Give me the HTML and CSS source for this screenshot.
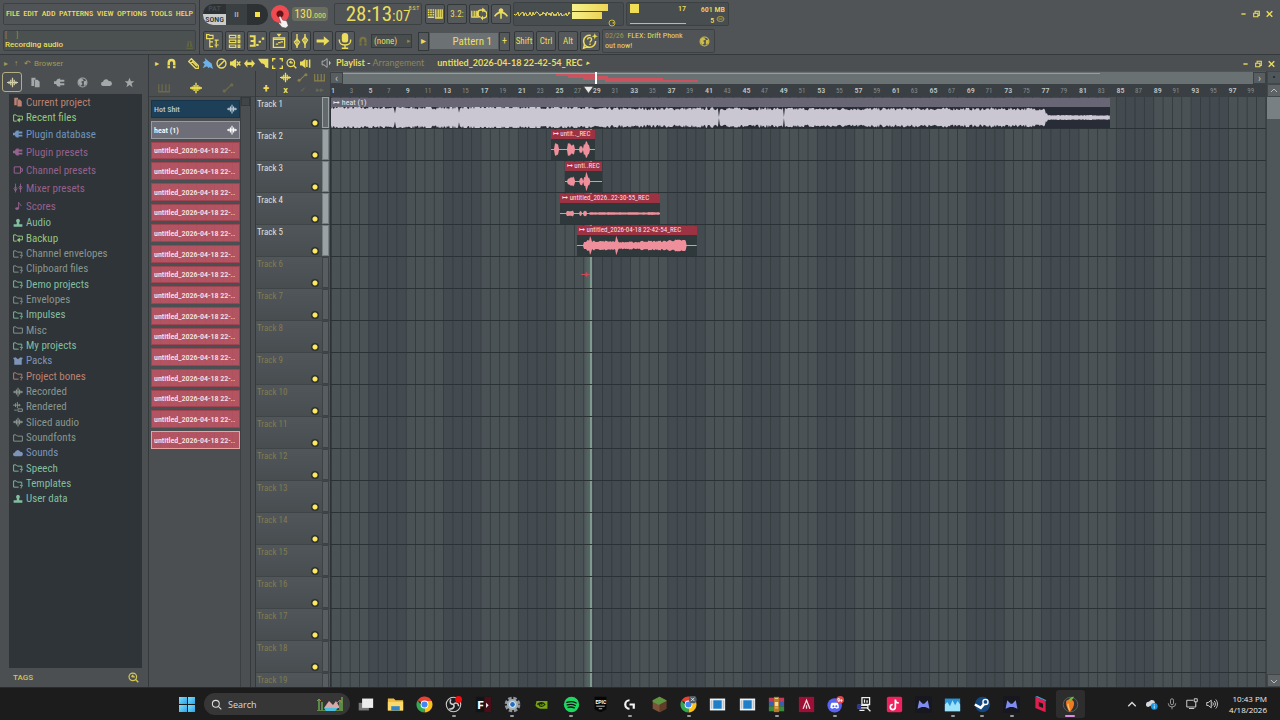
FILE: index.html
```
<!DOCTYPE html>
<html lang="en">
<head>
    <meta charset="UTF-8">
    <title>Playlist - Arrangement</title>
    <link rel="stylesheet" href="styles.css">
</head>
<body>
    <!-- Shared icons -->
    <svg class="defs" aria-hidden="true">
        <symbol id="wave" viewBox="0 0 16 16"><path d="M0 8h16M3 6v4M5.500 4v8M8 1v14M10.500 4v8M13 6v4" stroke="currentColor" stroke-width="1.800" fill="none"/></symbol>
        <symbol id="files" viewBox="0 0 16 16"><path d="M2 1h6v3H6v9H2zM7 4h4l3 3v8H7z" fill="currentColor"/></symbol>
        <symbol id="folder" viewBox="0 0 16 16"><path d="M1 13V3h4l2 2h8v8z" fill="none" stroke="currentColor" stroke-width="1.500"/></symbol>
        <symbol id="folderdot" viewBox="0 0 16 16"><path d="M9 13H1V3h4l2 2h7v4M11 10h4v1l-2 2v2" fill="none" stroke="currentColor" stroke-width="1.500"/></symbol>
        <symbol id="folderback" viewBox="0 0 16 16"><path d="M6 13H1V3h4l2 2h8v6H9" fill="none" stroke="currentColor" stroke-width="1.600"/><path d="M6 11l5-4v8z" fill="currentColor"/></symbol>
        <symbol id="plug" viewBox="0 0 16 16"><path d="M0 6h3c1-3 3-4 6-4v12c-3 0-5-1-6-4H0zM8 4h7v3H8zM8 9h7v3H8z" fill="currentColor"/></symbol>
        <symbol id="channel" viewBox="0 0 16 16"><path d="M2 3h10v10H2zM12 6h3v4h-3" fill="none" stroke="currentColor" stroke-width="1.600"/></symbol>
        <symbol id="mixer" viewBox="0 0 16 16"><path d="M4 1v14M12 1v14" stroke="currentColor" stroke-width="1.400"/><path d="M4 6l2.500 3L4 13 1.500 9zM12 4l2.500 3-2.500 4-2.500-4z" fill="none" stroke="currentColor" stroke-width="1.400"/></symbol>
        <symbol id="note" viewBox="0 0 16 16"><path d="M9 2v10M9 2c0 3 4 3 4 6" fill="none" stroke="currentColor" stroke-width="1.500"/><ellipse cx="6.500" cy="12" rx="3" ry="2.200" fill="currentColor"/></symbol>
        <symbol id="person" viewBox="0 0 16 16"><path d="M8 1a3.500 3.500 0 0 1 2 6v3h5v4H1v-4h5V7a3.500 3.500 0 0 1 2-6z" fill="currentColor"/></symbol>
        <symbol id="box" viewBox="0 0 16 16"><path d="M0 3l4-1 4 3 4-3 4 1-2 3v8H2V6z" fill="currentColor"/></symbol>
        <symbol id="render" viewBox="0 0 16 16"><path d="M0 5h12M4 2v6M7 0v10M10 3v4M2 13h4M8 11h7v4H8z" stroke="currentColor" stroke-width="1.500" fill="none"/></symbol>
        <symbol id="cloud" viewBox="0 0 16 16"><path d="M3 13a3 3 0 0 1 0-6 4.500 4.500 0 0 1 8.500-1A3.500 3.500 0 0 1 13 13z" fill="currentColor"/></symbol>
        <symbol id="globe" viewBox="0 0 16 16"><circle cx="8" cy="8" r="6.500" fill="none" stroke="currentColor" stroke-width="1.500"/><path d="M2 4l5-2 3 3-4 2 2 3-3 3-3-4zM10 6l4-1v5l-4 3z" fill="currentColor"/></symbol>
        <symbol id="star" viewBox="0 0 16 16"><path d="M8 1l2 5h5l-4 3.500L12.500 15 8 11.500 3.500 15 5 9.500 1 6h5z" fill="currentColor"/></symbol>
        <symbol id="magnet" viewBox="0 0 16 16"><path d="M4 15V7a4 4 0 0 1 8 0v8" fill="none" stroke="currentColor" stroke-width="3.500"/><path d="M2 11h5M9 11h5" stroke="#4a4f50"/></symbol>
        <symbol id="piano" viewBox="0 0 16 16"><path d="M1 3v10h14V3M5.500 3v9M10.500 3v9" fill="none" stroke="currentColor" stroke-width="1.700"/></symbol>
        <symbol id="auto" viewBox="0 0 16 16"><path d="M3 13L13 3" stroke="currentColor" stroke-width="1.600"/><circle cx="3" cy="12" r="2.200" fill="currentColor"/><circle cx="13" cy="4" r="2.200" fill="currentColor"/></symbol>
        <symbol id="pencil" viewBox="0 0 16 16"><path d="M1 5l4-4 10 10v4h-4zM4 8l4-4M6 5l7 7" fill="none" stroke="currentColor" stroke-width="1.800"/></symbol>
        <symbol id="brush" viewBox="0 0 16 16"><path d="M4 0l6 5 4 3 2 8-5-3-1 2-3-3-6 3 3-6-3-3 4-2z" fill="currentColor"/></symbol>
        <symbol id="no" viewBox="0 0 16 16"><path d="M3.500 12.500l9-9" stroke="currentColor" stroke-width="2"/><circle cx="8" cy="8" r="6.500" fill="none" stroke="currentColor" stroke-width="2"/></symbol>
        <symbol id="mute" viewBox="0 0 16 16"><path d="M0 5h3l6-4v14l-6-4H0z" fill="currentColor"/><path d="M10 5l5 6M15 5l-5 6" stroke="currentColor" stroke-width="2"/></symbol>
        <symbol id="slip" viewBox="0 0 16 16"><path d="M0 8l5-6v4h6V2l5 6-5 6v-4H5v4z" fill="currentColor"/></symbol>
        <symbol id="slice" viewBox="0 0 16 16"><path d="M0 1h15v14l-5-2v-3L7 8H5L2 4z" fill="currentColor"/></symbol>
        <symbol id="select" viewBox="0 0 16 16"><path d="M1 5V1h4M11 1h4v4M15 11v4h-4M5 15H1v-4" fill="none" stroke="currentColor" stroke-width="2"/></symbol>
        <symbol id="lens" viewBox="0 0 16 16"><circle cx="7" cy="7" r="5.500" fill="none" stroke="currentColor" stroke-width="1.800"/><path d="M11 11l4 4M5 7l2-2M7 4v3h3" stroke="currentColor" stroke-width="2" fill="none"/></symbol>
        <symbol id="play" viewBox="0 0 16 16"><path d="M0 5h3l5-4v14l-5-4H0z" fill="currentColor"/><path d="M10 3v10M14 2v12" stroke="currentColor" stroke-width="2.200"/></symbol>
        <symbol id="speaker" viewBox="0 0 16 16"><path d="M1 5h3l5-4v14l-5-4H1z" fill="none" stroke="currentColor" stroke-width="1.400"/><path d="M12 4l3 4-3 4z" fill="currentColor"/></symbol>
        <symbol id="tree" viewBox="0 0 20 20"><path d="M2 2h3l1 1h4v4H2zM6 8v10M6 11h4M6 17h4M14 9v5M12 9h5M12 15h5M14 15v3" fill="none" stroke="currentColor" stroke-width="1.500"/></symbol>
        <symbol id="rack" viewBox="0 0 20 20"><path d="M3 3h8v3H3zM3 9h8v3H3zM3 15h8v3H3zM14 3h2v3h-2zM14 9h2v3h-2zM14 15h2v3h-2z" fill="none" stroke="currentColor" stroke-width="1.500"/></symbol>
        <symbol id="roll" viewBox="0 0 20 20"><path d="M1 4h6v12H1M2 10h5M9 15h3M12 11h3M16 7h3" fill="none" stroke="currentColor" stroke-width="2.600"/></symbol>
        <symbol id="plist" viewBox="0 0 20 20"><path d="M3 6h14v12H3zM3 8h14M6 14h3M9 12h3M12 11h3" fill="none" stroke="currentColor" stroke-width="1.600"/><path d="M7 1h6l-3 4z" fill="currentColor"/></symbol>
        <symbol id="arrow" viewBox="0 0 20 20"><path d="M2 8h9V4l7 6-7 6v-4H2z" fill="currentColor"/></symbol>
        <symbol id="mic" viewBox="0 0 20 20"><rect x="6" y="0" width="8" height="12" rx="4" fill="currentColor"/><path d="M3 8v2a7 5 0 0 0 14 0V8M10 15v4M6 19h8" fill="none" stroke="currentColor" stroke-width="1.800"/></symbol>
        <symbol id="typing" viewBox="0 0 20 20"><path d="M1 5h2M4 5h2M7 5h2M1 8h2M4 8h2M7 8h2M1 11h2M4 11h2M7 11h2M1 14h8" stroke="currentColor" stroke-width="2"/><path d="M11 4v11h8V4M14 4v10M16.500 4v10" fill="none" stroke="currentColor" stroke-width="1.700"/></symbol>
        <symbol id="loop" viewBox="0 0 20 20"><path d="M1 6v8h8V6M4 6v7M6.500 6v7" fill="none" stroke="currentColor" stroke-width="1.600"/><path d="M12 14a4.500 4.500 0 0 1 1-9h2M16 6a4.500 4.500 0 0 1-1 9" fill="none" stroke="currentColor" stroke-width="2"/><path d="M14 2l4 3-4 3zM15 12v6l-3-3z" fill="currentColor"/></symbol>
        <symbol id="multi" viewBox="0 0 20 20"><path d="M10 3v13M10 8c-4 0-6 2-8 5M10 8c4 0 6 2 8 5" fill="none" stroke="currentColor" stroke-width="2"/><circle cx="10" cy="6" r="3" fill="currentColor"/></symbol>
        <symbol id="help" viewBox="0 0 20 20"><path d="M11 3a7.500 7.500 0 1 0 6 7M3 15l-1 4 5-2" fill="none" stroke="currentColor" stroke-width="1.900"/><path d="M7 8c0-3 5-3 5 0 0 2-2 2-2 4M10 13v2" fill="none" stroke="currentColor" stroke-width="1.700"/><path d="M16 0l1 3 3 1-3 1-1 3-1-3-3-1 3-1z" fill="currentColor"/></symbol>
        <symbol id="chrome" viewBox="0 0 20 20"><path d="M10 10L2 5a9.300 9.300 0 0 1 16.500 1H10z" fill="#e64335"/><path d="M10 10V6h8.500A9.300 9.300 0 0 1 10 19.300z" fill="#fbc116"/><path d="M2 5l5 7 4 2-2 5.300A9.300 9.300 0 0 1 2 5z" fill="#33a853"/><circle cx="10" cy="10" r="4.600" fill="#fff"/><circle cx="10" cy="10" r="3.600" fill="#4285f4"/></symbol>
        <symbol id="window" viewBox="0 0 20 20"><path d="M1 3h18v14H1z" fill="#f1f3f5"/><path d="M5 5h10v10H5z" fill="#1e7fc8"/><path d="M2 5h2v10H2zM16 5h2v10h-2z" fill="#b9c3ca"/></symbol>
        <symbol id="medal" viewBox="0 0 20 20"><path d="M0 0h20v20H0z" fill="#17171f"/><path d="M3 15l2-10 4 4h2l4-4 2 10-5-2H8z" fill="#7f8cf0"/></symbol>
    </svg>

    <header class="top">
        <div class="top-left">
            <nav class="menu panel">
                <button>FILE</button><button>EDIT</button><button>ADD</button><button>PATTERNS</button><button>VIEW</button><button>OPTIONS</button><button>TOOLS</button><button>HELP</button>
            </nav>
            <div class="hint panel">
                <span class="brackets">[ &nbsp; &nbsp; ]</span>
                <span class="hint-text">Recording audio</span>
                <svg class="metronome" viewBox="0 0 16 16"><path d="M5 1h6l3 14H2z" fill="#5e6441"/><path d="M8 2v9M4 12h8" stroke="#3d4243"/></svg>
            </div>
        </div>
        <div class="bars">
            <div class="bar">
                <div class="transport">
                    <button class="mode"><span class="pat">PAT</span><span class="song">SONG</span></button>
                    <button class="pause" aria-label="Pause">II</button>
                    <button class="stop" aria-label="Stop"><i></i></button>
                </div>
                <button class="record" aria-label="Record">
                    <svg class="cursor" viewBox="0 0 14 16"><path d="M1 1l2-1 3 5 5 1 2 6-3 3-5-1-4-5 1-1 2 1z" fill="#f4f1f1" stroke="#555" stroke-width=".600"/></svg>
                </button>
                <output class="tempo">130<small>.000</small></output>
                <div class="clock panel"><span>28:13</span><span class="sub">:07</span><small>B:S:T</small></div>
                <div class="group">
                    <button class="tool" aria-label="Typing keyboard"><svg><use href="#typing"/></svg></button>
                    <button class="tool" aria-label="Countdown">3.2:</button>
                    <button class="tool" aria-label="Loop record"><svg><use href="#loop"/></svg></button>
                    <button class="tool" aria-label="Multilink"><svg><use href="#multi"/></svg></button>
                </div>
                <div class="scope panel">
                    <svg class="scope-wave" viewBox="0 0 58 22"><path id="scopePath" fill="none" stroke="#e9d85b"/></svg>
                    <div class="meters"><i></i><i></i><svg viewBox="0 0 16 16"><circle cx="8" cy="8" r="6" fill="none" stroke="#c9b33d" stroke-width="2"/><path d="M8 8l4-3v5z" fill="#c9b33d"/></svg></div>
                </div>
                <div class="stats panel">
                    <div class="cpu"><i></i><b>17</b></div>
                    <div class="mem"><b>601 MB</b><b>5 <svg viewBox="0 0 16 16"><ellipse cx="8" cy="8" rx="7" ry="5" fill="none" stroke="#b3a23f" stroke-width="2"/><path d="M4 8h8" stroke="#b3a23f" stroke-width="2"/></svg></b></div>
                </div>
            </div>
            <div class="bar">
                <div class="group">
                    <button class="tool" aria-label="Browser"><svg><use href="#tree"/></svg></button>
                    <button class="tool" aria-label="Channel rack"><svg><use href="#rack"/></svg></button>
                    <button class="tool" aria-label="Piano roll"><svg><use href="#roll"/></svg></button>
                    <button class="tool" aria-label="Playlist"><svg><use href="#plist"/></svg></button>
                    <button class="tool" aria-label="Mixer"><svg><use href="#mixer"/></svg></button>
                    <button class="tool" aria-label="Next"><svg><use href="#arrow"/></svg></button>
                    <button class="tool" aria-label="Microphone"><svg><use href="#mic"/></svg></button>
                </div>
                <div class="snap">
                    <svg><use href="#magnet"/></svg>
                    <select aria-label="Snap"><option>(none)</option></select>
                    <span>▸</span>
                </div>
                <div class="pattern">
                    <button class="slim" aria-label="Pattern menu">▸</button>
                    <input type="text" value="Pattern 1" aria-label="Pattern">
                    <button class="slim" aria-label="Add pattern">+</button>
                </div>
                <div class="group">
                    <button class="tool">Shift</button>
                    <button class="tool">Ctrl</button>
                    <button class="tool">Alt</button>
                    <button class="tool" aria-label="Help"><svg><use href="#help"/></svg></button>
                </div>
                <div class="news panel">
                    <p><span>02/26</span>&nbsp; FLEX: Drift Phonk<br>out now!</p>
                    <svg><use href="#globe"/></svg>
                </div>
            </div>
        </div>
        <div class="win">
            <button aria-label="Minimize"><svg viewBox="0 0 10 10"><path d="M2 5h6" stroke="currentColor" stroke-width="2"/></svg></button>
            <button aria-label="Restore"><svg viewBox="0 0 10 10"><path d="M1 4h6v5H1zM3 4V1h6v6H7" fill="none" stroke="currentColor" stroke-width="1.500"/></svg></button>
            <button aria-label="Close"><svg viewBox="0 0 10 10"><path d="M1 1l8 8M9 1L1 9" stroke="currentColor" stroke-width="2"/></svg></button>
        </div>
    </header>

    <main>
        <aside class="browser">
            <div class="browser-title"><span>▸</span><span>↑</span><span>↶</span> Browser</div>
            <div class="browser-tabs">
                <button class="on" aria-label="All"><svg><use href="#wave"/></svg></button>
                <button aria-label="Files"><svg><use href="#files"/></svg></button>
                <button aria-label="Plugins"><svg><use href="#plug"/></svg></button>
                <button aria-label="Web"><svg><use href="#globe"/></svg></button>
                <button aria-label="Cloud"><svg><use href="#cloud"/></svg></button>
                <button aria-label="Starred"><svg><use href="#star"/></svg></button>
            </div>
            <ul class="tree">
                <li class="rust"><a href="#"><svg><use href="#files"/></svg>Current project</a></li>
                <li class="lime"><a href="#"><svg><use href="#folderback"/></svg>Recent files</a></li>
                <li class="blue tall"><a href="#"><svg><use href="#plug"/></svg>Plugin database</a></li>
                <li class="pink tall"><a href="#"><svg><use href="#plug"/></svg>Plugin presets</a></li>
                <li class="pink tall"><a href="#"><svg><use href="#channel"/></svg>Channel presets</a></li>
                <li class="pink tall"><a href="#"><svg><use href="#mixer"/></svg>Mixer presets</a></li>
                <li class="pink tall"><a href="#"><svg><use href="#note"/></svg>Scores</a></li>
                <li class="mint"><a href="#"><svg><use href="#person"/></svg>Audio</a></li>
                <li class="lime"><a href="#"><svg><use href="#folderback"/></svg>Backup</a></li>
                <li class="gray"><a href="#"><svg><use href="#folderdot"/></svg>Channel envelopes</a></li>
                <li class="gray"><a href="#"><svg><use href="#folderdot"/></svg>Clipboard files</a></li>
                <li class="mint"><a href="#"><svg><use href="#folderdot"/></svg>Demo projects</a></li>
                <li class="gray"><a href="#"><svg><use href="#folderdot"/></svg>Envelopes</a></li>
                <li class="mint"><a href="#"><svg><use href="#folderdot"/></svg>Impulses</a></li>
                <li class="gray"><a href="#"><svg><use href="#folder"/></svg>Misc</a></li>
                <li class="mint"><a href="#"><svg><use href="#folderdot"/></svg>My projects</a></li>
                <li class="blue2"><a href="#"><svg><use href="#box"/></svg>Packs</a></li>
                <li class="rust"><a href="#"><svg><use href="#folderdot"/></svg>Project bones</a></li>
                <li class="gray"><a href="#"><svg><use href="#wave"/></svg>Recorded</a></li>
                <li class="gray"><a href="#"><svg><use href="#render"/></svg>Rendered</a></li>
                <li class="gray"><a href="#"><svg><use href="#wave"/></svg>Sliced audio</a></li>
                <li class="gray"><a href="#"><svg><use href="#folder"/></svg>Soundfonts</a></li>
                <li class="blue2"><a href="#"><svg><use href="#cloud"/></svg>Sounds</a></li>
                <li class="mint"><a href="#"><svg><use href="#folderdot"/></svg>Speech</a></li>
                <li class="mint"><a href="#"><svg><use href="#folderdot"/></svg>Templates</a></li>
                <li class="mint"><a href="#"><svg><use href="#person"/></svg>User data</a></li>
            </ul>
            <div class="tags">TAGS <svg><use href="#lens"/></svg></div>
        </aside>

        <section class="playlist">
            <div class="titlebar">
                <div class="tools">
                    <button aria-label="Menu">▸</button>
                    <button aria-label="Snap"><svg><use href="#magnet"/></svg></button>
                    <button class="gap" aria-label="Draw"><svg><use href="#pencil"/></svg></button>
                    <button class="active" aria-label="Paint"><svg><use href="#brush"/></svg></button>
                    <button aria-label="Delete"><svg><use href="#no"/></svg></button>
                    <button aria-label="Mute"><svg><use href="#mute"/></svg></button>
                    <button aria-label="Slip"><svg><use href="#slip"/></svg></button>
                    <button aria-label="Slice"><svg><use href="#slice"/></svg></button>
                    <button aria-label="Select"><svg><use href="#select"/></svg></button>
                    <button aria-label="Zoom"><svg><use href="#lens"/></svg></button>
                    <button aria-label="Playback"><svg><use href="#play"/></svg></button>
                </div>
                <svg class="spk"><use href="#speaker"/></svg>
                <h1>Playlist - <span>Arrangement</span></h1>
                <strong>untitled_2026-04-18 22-42-54_REC</strong><em>▸</em>
                <div class="win">
                    <button aria-label="Minimize"><svg viewBox="0 0 10 10"><path d="M2 5h6" stroke="currentColor" stroke-width="2"/></svg></button>
                    <button aria-label="Restore"><svg viewBox="0 0 10 10"><path d="M1 4h6v5H1zM3 4V1h6v6H7" fill="none" stroke="currentColor" stroke-width="1.500"/></svg></button>
                    <button aria-label="Close"><svg viewBox="0 0 10 10"><path d="M1 1l8 8M9 1L1 9" stroke="currentColor" stroke-width="2"/></svg></button>
                </div>
            </div>

            <div class="workspace">
                <div class="picker">
                    <div class="picker-tabs">
                        <button aria-label="Patterns"><svg><use href="#piano"/></svg></button>
                        <button class="on" aria-label="Audio"><svg><use href="#wave"/></svg></button>
                        <button aria-label="Automation"><svg><use href="#auto"/></svg></button>
                    </div>
                    <div class="picker-body">
                        <div class="picker-list" id="pickerList">
                            <button class="navy">Hot Shit<svg><use href="#wave"/></svg></button>
                            <button class="grayclip">heat (1)<svg><use href="#wave"/></svg></button>
                        </div>
                        <div class="picker-scroll"><i></i></div>
                    </div>
                </div>

                <div class="arranger">
                    <div class="corner">
                        <button class="add" aria-label="Add track">+</button>
                        <div class="corner-icons">
                            <button class="lit" aria-label="Audio"><svg><use href="#wave"/></svg></button>
                            <button class="dim" aria-label="Automation"><svg><use href="#auto"/></svg></button>
                            <button class="dim" aria-label="Patterns"><svg><use href="#piano"/></svg></button>
                            <button aria-label="Clear">x</button>
                            <button class="dark" aria-label="Confirm">✓</button>
                            <button class="dark" aria-label="More">▸▸</button>
                        </div>
                    </div>
                    <div class="overview">
                        <button aria-label="Scroll left">‹</button>
                        <svg viewBox="0 0 910 12" preserveAspectRatio="none">
                            <path d="M0 1h757v1H0z" fill="#979d9f"/>
                            <path d="M213 2h40v2h12v2h55v2h35v2H262V8h-22V6h-15V4h-12z" fill="#c9535f"/>
                            <path d="M252 0h2v12h-2z" fill="#fff"/>
                        </svg>
                        <button aria-label="Scroll right">›</button>
                    </div>
                    <div class="ruler" id="ruler">
                        <svg class="marker" viewBox="0 0 10 8"><path d="M0 0h10L5 7z" fill="#e6e9e6" stroke="#444"/></svg>
                    </div>
                    <div class="heads" id="heads"></div>
                    <div class="lanes" id="lanes"><div class="playhead"></div></div>
                    <div class="vscroll">
                        <button class="dot" aria-label="Options">•</button>
                        <button aria-label="Scroll up"><svg viewBox="0 0 8 8"><path d="M1 5l3-3 3 3" fill="none" stroke="currentColor"/></svg></button>
                        <i></i>
                        <button class="down" aria-label="Scroll down"><svg viewBox="0 0 8 8"><path d="M1 3l3 3 3-3" fill="none" stroke="currentColor"/></svg></button>
                    </div>
                </div>
            </div>
        </section>
    </main>

    <footer class="taskbar">
        <button class="start" aria-label="Start"><i></i><i></i><i></i><i></i></button>
        <label class="search">
            <svg viewBox="0 0 16 16"><circle cx="7" cy="7" r="5" fill="none" stroke="#ddd" stroke-width="1.500"/><path d="M11 11l4 4" stroke="#ddd" stroke-width="1.500"/></svg>
            <input type="text" placeholder="Search" aria-label="Search">
            <svg class="scene" viewBox="0 0 27 16"><path d="M1 14h26v1H1z" fill="#5d8b45"/><path d="M8 12l5-7 4 4 3-4 4 7z" fill="#d6a9ab"/><path d="M8 12h14l-3 3h-9z" fill="#4ec0dd"/><path d="M3 14V3M6 14V6M24 14V4M26 14V1" stroke="#5b8a48" stroke-width="2"/><path d="M1 5l2-2 2 2M21 7l3-3 2 3" stroke="#b08a45" fill="none"/></svg>
        </label>
        <div class="apps">
            <button aria-label="Task view"><svg viewBox="0 0 20 20"><path d="M2 8h12v9H2z" fill="#777"/><path d="M6 3h13v11H6z" fill="#ececec"/></svg></button>
            <button aria-label="Explorer"><svg viewBox="0 0 20 20"><path d="M1 3h7l2 2h9v12H1z" fill="#f0bd3f"/><path d="M1 7h18v10H1z" fill="#fbd96b"/><path d="M5 12h10v5H5z" fill="#2f86cf"/></svg></button>
            <button aria-label="Chrome"><svg><use href="#chrome"/></svg></button>
            <button class="run" aria-label="OBS"><svg viewBox="0 0 20 20"><circle cx="10" cy="10" r="8.500" fill="#1d1d20" stroke="#ccc" stroke-width="1.300"/><path d="M10 10c-4 0-5-3-3-6M10 10c2-3 6-2 6 2M10 10c2 3-1 6-5 5" stroke="#ccc" stroke-width="1.800" fill="none"/><circle cx="16" cy="4" r="4" fill="#f00d0d"/></svg></button>
            <button aria-label="F"><svg viewBox="0 0 20 20"><path d="M1 1h18v18H1z" fill="#0f1417"/><path d="M11 1h8v18h-8z" fill="#4b0d17"/><text x="3" y="15" class="glyph">F</text><path d="M13 8l3 3-3 3z" fill="#eee"/></svg></button>
            <button class="run" aria-label="Settings"><svg viewBox="0 0 20 20"><circle cx="10" cy="10" r="7.500" fill="none" stroke="#8d969d" stroke-width="3.500" stroke-dasharray="3.900 2"/><circle cx="10" cy="10" r="6.500" fill="#a7aeb4"/><circle cx="10" cy="10" r="3.800" fill="#e8eef3"/><circle cx="10" cy="10" r="2.800" fill="#1f6fc0"/></svg></button>
            <button aria-label="NVIDIA"><svg viewBox="0 0 20 20"><path d="M4 6h13v9H9c-3 0-6-3-6-4s1-3 1-5z" fill="#76a712"/><path d="M5 10c3-3 7-3 9 0-2 3-6 3-7 0 1-1 3-1 4 0" fill="none" stroke="#1b2608" stroke-width="1.300"/></svg></button>
            <button class="run" aria-label="Spotify"><svg viewBox="0 0 20 20"><circle cx="10" cy="10" r="9" fill="#1ed760"/><path d="M4.500 7.500c4-1.500 8-1 11 .700M5 10.500c3-1 7-.700 9.500.700M6 13.300c3-.800 5-.500 7.500.600" fill="none" stroke="#111" stroke-width="1.600" stroke-linecap="round"/></svg></button>
            <button aria-label="Epic Games"><svg viewBox="0 0 20 20"><path d="M3 1h14v15l-7 3-7-3z" fill="#060606"/><text x="4" y="9" class="tiny">EPIC</text><path d="M5 12h10M8 15h4" stroke="#ddd"/></svg></button>
            <button class="run" aria-label="Logitech"><svg viewBox="0 0 20 20"><path d="M10 5a5 5 0 0 0 0 10M10 10h5v5" fill="none" stroke="#f4f4f4" stroke-width="2.600"/></svg></button>
            <button aria-label="Minecraft"><svg viewBox="0 0 20 20"><path d="M10 1l8 4v10l-8 4-8-4V5z" fill="#7c5238"/><path d="M10 1l8 4v2l-8 4-8-4V5z" fill="#5f9440"/><path d="M10 10l8-4v9l-8 4z" fill="#5f3d29"/></svg></button>
            <button class="run" aria-label="Chrome profile"><svg viewBox="0 0 20 20"><use href="#chrome"/><circle cx="15" cy="4" r="4.600" fill="#4f5c66"/><path d="M13 2l4 4M17 2l-4 4" stroke="#eee"/></svg></button>
            <button aria-label="Window"><svg><use href="#window"/></svg></button>
            <button aria-label="Window"><svg><use href="#window"/></svg></button>
            <button class="run" aria-label="WinRAR"><svg viewBox="0 0 20 20"><path d="M1 2h18v5H1z" fill="#c33b57"/><path d="M1 7h18v5H1z" fill="#3d5db5"/><path d="M1 12h18v6H1z" fill="#3a8b3e"/><path d="M7 1h6v18H7z" fill="#b77b2b"/><path d="M8 7h4v5H8z" fill="#f1de9a"/><path d="M8 3h4M8 14h4" stroke="#f1de9a"/></svg></button>
            <button aria-label="A"><svg viewBox="0 0 20 20"><path d="M1 1h18v18H1z" fill="#9d0f35"/><path d="M6 15l4-10 4 10M10 11v4" fill="none" stroke="#f3d8df" stroke-width="1.500"/></svg></button>
            <button class="run" aria-label="Discord"><svg viewBox="0 0 20 20"><circle cx="9" cy="11" r="8.500" fill="#5865f2"/><path d="M4 14c0-4 1-6 2-6h6c1 0 2 2 2 6l-3 1-1-1H8l-1 1z" fill="#fff"/><circle cx="7.500" cy="12" r="1.200" fill="#5865f2"/><circle cx="11" cy="12" r="1.200" fill="#5865f2"/><circle cx="15.500" cy="4.500" r="4.500" fill="#e2474b"/><text x="12" y="7" class="tiny">9+</text></svg></button>
            <button aria-label="Setup"><svg viewBox="0 0 20 20"><path d="M7 2h9v8H7zM3 11h11v3H3z" fill="#161616" stroke="#eee" stroke-width="1.500"/><path d="M10 4v4M13 5v3M13 14l4 4M4 17h6" stroke="#eee" stroke-width="1.500"/><path d="M1 10h5v5H1z" fill="#2c3791"/></svg></button>
            <button aria-label="TikTok"><svg viewBox="0 0 20 20"><rect x="1" y="1" width="18" height="18" rx="2" fill="#f0215c"/><path d="M11 4v9a3 3 0 1 1-3-3M11 4c0 3 2 4 4 4" fill="none" stroke="#fff" stroke-width="2"/></svg></button>
            <button aria-label="Medal"><svg><use href="#medal"/></svg></button>
            <button class="run" aria-label="Monitor"><svg viewBox="0 0 20 20"><path d="M1 3h18v15H1z" fill="#2b94d6"/><path d="M1 10l3-3 3 5 3-7 3 6 3-5 3 4v8H1z" fill="#9be2fa"/></svg></button>
            <button class="run" aria-label="Steam"><svg viewBox="0 0 20 20"><circle cx="10" cy="10" r="9" fill="#14477e"/><path d="M1 10l7 4 6-7" stroke="#fff" stroke-width="3" fill="none"/><circle cx="13.500" cy="7" r="3" fill="#14477e" stroke="#fff" stroke-width="1.600"/></svg></button>
            <button class="run" aria-label="Medal"><svg><use href="#medal"/></svg></button>
            <button aria-label="Roblox"><svg viewBox="0 0 20 20"><path d="M4 1l12 5v13L4 14z" fill="#e21d50"/><path d="M8 7l5 2v5l-5-2z" fill="#171717"/><path d="M4 1l2-1 11 5-1 1z" fill="#39a5c8"/></svg></button>
            <button class="run current" aria-label="FL Studio"><svg viewBox="0 0 20 20"><circle cx="10" cy="10" r="8.500" fill="#2e3030" stroke="#616767"/><path d="M5 6c3-3 8-2 9 1 1 4-2 9-5 12-2-3-5-8-4-13z" fill="#f07a20"/><path d="M7 9c0 3 1 5 2 8" stroke="#fdc36b" stroke-width="1.500" fill="none"/><path d="M8 6c0-3 3-5 6-5-1 3-3 5-6 5z" fill="#6cbf3e"/></svg></button>
        </div>
        <div class="tray">
            <svg viewBox="0 0 16 16"><path d="M3 11l5-5 5 5" fill="none" stroke="#ddd" stroke-width="1.800"/></svg>
            <svg viewBox="0 0 16 16"><path d="M3 12a3.500 3.500 0 0 1 1-7c3-4 8-2 8 2z" fill="#d5d9dd"/><circle cx="11" cy="11" r="4.500" fill="#1593e0"/><path d="M11 8v1M11 10v4" stroke="#fff"/></svg>
            <svg viewBox="0 0 16 16"><rect x="6" y="1" width="4" height="8" rx="2" fill="none" stroke="#bbb"/><path d="M3 7a5 5 0 0 0 10 0M8 12v3" fill="none" stroke="#bbb"/></svg>
            <svg viewBox="0 0 16 16"><path d="M10 3H1v9h12V9M4 14h7M11 1h4v4h-4zM13 5v5" fill="none" stroke="#ddd" stroke-width="1.200"/></svg>
            <svg viewBox="0 0 16 16"><path d="M1 6h2l4-3v10l-4-3H1zM9 6c1 1 1 3 0 4M11 4c2 2 2 6 0 8M13 2c3 3 3 9 0 12" fill="none" stroke="#ddd" stroke-width="1.200"/></svg>
            <div class="time">10:43 PM<br>4/18/2026</div>
        </div>
    </footer>
    <script src="script.js"></script>
</body>
</html>
```
FILE: styles.css
```
:root {
    --bg: #4b4f51;
    --line: #343a3c;
    --dark: #2e3437;
    --yellow: #ecdc5c;
    --narrow: "Roboto Condensed", "Liberation Sans", sans-serif;
}

* { box-sizing: border-box; }

body {
    margin: 0;
    height: 100vh;
    display: flex;
    flex-direction: column;
    overflow: hidden;
    background: var(--bg);
    color: var(--yellow);
    font-family: var(--narrow);
    font-size: 11px;
}

button, input, select {
    font: inherit;
    color: inherit;
    background: none;
    border: 0;
    padding: 0;
    margin: 0;
    min-width: 0;
}

button { cursor: pointer; }
svg { display: block; flex: none; }
.defs { position: absolute; width: 0; height: 0; }
.panel { border: 1px solid #3c4243; border-radius: 2px; background: #505456; }

/* Header */
.top {
    display: flex;
    height: 55px;
    flex: none;
    background: #505456;
    border-bottom: 1px solid var(--line);
}

.top-left {
    width: 200px;
    padding: 3px;
    border-right: 1px solid var(--line);
    display: flex;
    flex-direction: column;
    gap: 5px;
}

.menu {
    height: 22px;
    display: flex;
    align-items: center;
    justify-content: space-between;
    padding: 0 2px;
    font-size: 8px;
    font-weight: 500;
}

.hint {
    height: 22px;
    display: flex;
    align-items: flex-end;
    position: relative;
    padding: 0 1px;
    background: #4b5051;
}

.hint-text { font: 500 8px/10px Roboto, sans-serif; }
.brackets { position: absolute; top: 0; left: 1px; font-size: 8px; color: #93903f; }
.metronome { width: 9px; height: 10px; margin-left: auto; }

.bars { display: flex; flex-direction: column; padding: 3px; }
.bar { display: flex; height: 22px; align-items: center; }
.bar + .bar { margin-top: 5px; }

.transport {
    display: flex;
    width: 65px;
    height: 21px;
    border-radius: 10px;
    background: #2d3133;
    overflow: hidden;
    margin-right: 2px;
}

.transport button { width: 21px; font-size: 8px; font-weight: 700; }
.transport .mode { width: 23px; display: flex; flex-direction: column; }
.mode span { width: 100%; text-align: center; font-size: 8px; line-height: 11px; }
.mode .pat { color: #44494b; line-height: 10px; }
.mode .song { background: #cbcdcb; color: #2c2f30; font-weight: 500; }
.transport .pause { background: #3a3f41; color: #a9abab; }
.stop i { display: block; width: 5px; height: 5px; margin: auto; background: #f3e04b; }

.record {
    position: relative;
    width: 18px;
    height: 18px;
    border-radius: 50%;
    background: radial-gradient(circle, #6b1217 0 3px, #ef4b52 4px);
    margin: 0 3px 0 1px;
}

.cursor { position: absolute; left: 7px; top: 11px; width: 11px; height: 13px; z-index: 2; }

.tempo {
    width: 36px;
    height: 14px;
    border-radius: 3px;
    background: #686d60;
    font-size: 12px;
    line-height: 14px;
    text-align: center;
    margin-right: 6px;
}

.tempo small { font-size: 8px; }

.clock {
    position: relative;
    display: flex;
    align-items: baseline;
    justify-content: center;
    width: 88px;
    height: 22px;
    font-size: 21px;
    line-height: 20px;
    margin-right: 3px;
}

.clock .sub { font-size: 15px; }
.clock small { position: absolute; right: 2px; top: 1px; font-size: 5px; line-height: 6px; }

.group { display: flex; gap: 2px; margin-right: 2px; }

.tool {
    width: 20px;
    height: 20px;
    border: 1px solid #33393b;
    border-radius: 2px;
    background: #55595b;
    display: flex;
    align-items: center;
    justify-content: center;
    font-size: 9px;
}

.tool svg { width: 16px; height: 16px; }

.scope { width: 111px; height: 24px; display: flex; margin-right: 2px; background: #484d4f; }
.scope-wave { width: 58px; height: 22px; }
.meters { flex: 1; padding-top: 1px; }
.meters i { display: block; width: 36px; height: 7px; margin-bottom: 1px; background: linear-gradient(to right, #f6f08a, #ecd457); }
.meters i + i { width: 30px; }
.meters svg { width: 8px; height: 8px; margin: -1px 7px 0 auto; }

.stats { width: 103px; height: 24px; display: flex; justify-content: space-between; padding: 1px 3px; font-size: 8px; background: #484d4f; }
.stats b { font-weight: 500; }
.cpu { width: 56px; display: flex; justify-content: space-between; border-bottom: 1px solid #d1bf4a; }
.cpu i { width: 9px; height: 9px; background: #f0dd55; }
.mem { display: flex; flex-direction: column; align-items: flex-end; line-height: 11px; }
.mem svg { display: inline; width: 9px; height: 8px; }

.snap { display: flex; align-items: center; width: 56px; margin-right: 5px; position: relative; }
.snap > svg { width: 10px; height: 10px; color: #7d7540; margin: 0 3px 0 1px; }
.snap select { appearance: none; width: 41px; height: 14px; font-size: 9px; padding-left: 2px; border: 1px solid #363c3e; background: #484d4e; }
.snap span { position: absolute; right: 2px; font-size: 7px; color: #908646; }

.pattern { display: flex; gap: 1px; align-items: center; margin-right: 4px; }
.slim { width: 11px; height: 19px; border: 1px solid #33393b; background: #55595b; font-size: 10px; line-height: 10px; }
.pattern input { width: 68px; height: 16px; background: #6c7274; text-align: right; font-size: 11px; padding-right: 6px; }

.news { width: 113px; height: 24px; display: flex; align-items: center; justify-content: space-between; padding: 0 4px 0 2px; }
.news p { margin: 0; white-space: nowrap; font: 8px/10px "Roboto Condensed", sans-serif; }
.news span { color: #a09748; }
.news svg { width: 11px; height: 11px; color: #cfbd49; }

.win { display: flex; gap: 2px; margin-left: auto; padding: 9px 5px 0 0; align-self: flex-start; }
.win button { width: 11px; height: 9px; display: grid; place-items: center; }
.win svg { width: 7px; height: 8px; }

/* Browser */
main { flex: 1; min-height: 0; display: flex; }

.browser { width: 149px; display: flex; flex-direction: column; padding-right: 6px; border-right: 1px solid var(--line); }
.browser-title { height: 16px; display: flex; align-items: center; gap: 4px; padding-left: 4px; font: 8px Roboto, sans-serif; color: #a19a52; }
.browser-title span { width: 6px; }
.browser-tabs { display: flex; justify-content: space-between; height: 23px; padding: 1px 2px 2px; }
.browser-tabs button { width: 20px; display: grid; place-items: center; color: #a4a8a8; }
.browser-tabs svg { width: 11px; height: 11px; }
.browser-tabs .on { border: 1px solid #b3ad82; border-radius: 3px; color: #d3d0a8; }

.tree { flex: 1; list-style: none; margin: 0 0 0 9px; padding: 0; background: var(--dark); }
.tree li { height: 15px; }
.tree li:nth-child(3n), .tree li:first-child { height: 16px; }
.tree li.tall { height: 18px; }
.tree a { display: flex; align-items: center; gap: 3px; height: 100%; padding-left: 4px; color: inherit; text-decoration: none; font-size: 11px; }
.tree svg { width: 10px; height: 10px; }
.rust { color: #bb8173; }
.lime { color: #95c67c; }
.blue { color: #6f94bf; }
.blue2 { color: #7d93b8; }
.pink { color: #95618e; }
.mint { color: #83bda0; }
.gray { color: #89958f; }
.tags { height: 19px; display: flex; align-items: center; justify-content: space-between; padding: 0 3px 0 13px; font: 500 8px Roboto, sans-serif; color: #d3c552; }
.tags svg { width: 11px; height: 11px; }

/* Playlist window */
.playlist { flex: 1; min-width: 0; display: flex; flex-direction: column; }
.titlebar { height: 16px; display: flex; align-items: center; }
.tools { display: flex; padding-left: 1px; }
.tools button { width: 14px; display: grid; place-items: center; font-size: 8px; }
.tools .gap { margin-left: 8px; }
.tools svg { width: 11px; height: 11px; }
.tools .active { color: #6ab3ea; }
.spk { width: 11px; height: 10px; margin: 0 4px 0 9px; color: #b9bcba; }
.titlebar h1, .titlebar strong { margin: 0; font: 700 9px/16px Lato, sans-serif; }
.titlebar h1 span { color: #8b865b; font-weight: 400; }
.titlebar strong { margin-left: 13px; }
.titlebar em { font-size: 7px; margin-left: 3px; }
.titlebar .win { padding: 4px 3px 0 0; }

.workspace { flex: 1; min-height: 0; display: flex; }

.picker { width: 107px; display: flex; flex-direction: column; border-right: 1px solid var(--line); }
.picker-tabs { height: 26px; display: flex; gap: 18px; padding: 10px 0 0 8px; border-bottom: 1px solid #3b4143; }
.picker-tabs button { width: 14px; height: 14px; display: grid; place-items: center; color: #6c6a4a; }
.picker-tabs svg { width: 12px; height: 12px; }
.picker-tabs .on { color: #f3e24a; }
.picker-body { flex: 1; min-height: 0; display: flex; justify-content: space-between; }
.picker-list { width: 92px; padding: 3px 0 0 2px; display: flex; flex-direction: column; gap: 3px; }
.picker-list button {
    height: 18px;
    display: flex;
    align-items: center;
    justify-content: space-between;
    padding: 0 2px;
    font-size: 8px;
    font-weight: 500;
    color: #fbe6e8;
    background: repeating-linear-gradient(to right, transparent 0 8px, #a4475533 8px 9px), #b25462;
    border: 1px solid #9d4450;
    white-space: nowrap;
}
.picker-list button:nth-child(3n) { height: 17px; }
.picker-list svg { width: 10px; height: 10px; }
.picker-list .navy { background: #1d3f58; border-color: #17344a; color: #b8cad3; }
.picker-list .grayclip { background: #6e6e79; border-color: #9a9aa3; color: #fff; }
.picker-list .selected { border-color: #e7a39f; }
.picker-scroll { width: 11px; border-left: 1px solid #3a4042; border-right: 1px solid var(--line); margin-right: 4px; }
.picker-scroll i { display: block; height: 9px; background: #404647; border: 1px solid #343a3c; }

/* Arranger grid */
.arranger {
    flex: 1;
    min-width: 0;
    display: grid;
    grid-template-columns: 74px 1fr 15px;
    grid-template-rows: 13px 13px 1fr;
}

.corner { grid-row: 1 / 3; display: flex; align-items: flex-end; border-bottom: 1px solid #3b4143; }
.add { width: 20px; font-size: 13px; line-height: 14px; font-weight: 700; }
.corner-icons { flex: 1; height: 25px; display: grid; grid-template-columns: repeat(3, 17px); place-items: center; border-left: 1px solid #3c4243; }
.corner-icons button { height: 12px; font: 700 9px/12px Roboto, sans-serif; }
.corner-icons svg { width: 11px; height: 11px; }
.corner-icons .lit { color: #f3e24a; }
.corner-icons .dim { color: #8b8248; }
.corner-icons .dark { color: #62675a; font-size: 7px; }

.overview { display: flex; align-items: stretch; background: #6a7173; border-top: 1px solid #50575a; }
.overview svg { flex: 1; height: 12px; min-width: 0; }
.overview button { width: 13px; background: #585e60; border: 1px solid #3c4244; color: #bfc3c3; line-height: 9px; font-size: 11px; }

.ruler { position: relative; display: grid; grid-template-columns: repeat(50, 1fr); background: #393f42; color: #858b8c; font: 7px/14px var(--narrow); padding-left: 1px; overflow: hidden; }
.ruler span:nth-of-type(odd) { color: #c2c7c7; font-size: 8px; font-weight: 500; }
.marker { position: absolute; left: 27%; top: 2px; width: 11px; height: 9px; }

.heads, .lanes { overflow: hidden; position: relative; min-height: 0; }
.track { height: 32px; display: flex; justify-content: space-between; border-bottom: 1px solid #3f4547; background: linear-gradient(#50565a, #484d50); }
.track span { padding: 2px 0 0 1px; font-size: 9px; line-height: 10px; color: #817c50; }
.track.used span { color: #dfe2de; }
.track button { width: 8px; height: 8px; margin: 22px 3px 0 auto; border-radius: 50%; background: radial-gradient(circle, #ffe95c 0 2px, #2d3031 3px); }
.track i { width: 7px; border: 1px solid #3d4345; background: #575d60; margin-right: 1px; }
.track.used i { background: #9ba2a5; border-color: #777e80; }
.track:first-child i { background: #62686b; border-color: #9ba2a5; }

.lanes {
    background:
        linear-gradient(to right, #353c40 1px, transparent 1px) 0 0 / 1% 100%,
        linear-gradient(to right, #4b5256 50%, #434a50 50%) 0 0 / 8% 100%;
    border-left: 1px solid #2c3235;
}

.lane { height: 32px; border-bottom: 1px solid #2b3235; position: relative; }
.clip { position: absolute; top: 1px; bottom: 0; background: #2f383a; overflow: hidden; color: #ee8f9b; }
.clip h2 { margin: 0; height: 9px; padding-left: 2px; font: 400 7px/9px var(--narrow); color: #ffdfe2; background: #9b3342; white-space: nowrap; }
.clip h2::before { content: "↦ "; }
.clip svg { width: 100%; height: 21px; }
.clip.long { background: #282c36; color: #cac7d2; }
.clip.long h2 { background: #686674; color: #e4e4e8; font-size: 8px; }
.clip.pending { background: none; color: #cc4a57; }

/* Sits under the clips */
.playhead {
    position: absolute;
    left: 27%;
    width: 9px;
    top: 32px;
    bottom: 0;
    border-right: 2px solid #7f9a8e;
    background: linear-gradient(to right, transparent, #6f948355);
}

.vscroll { grid-column: 3; grid-row: 1 / 4; display: flex; flex-direction: column; background: #50575a; border-left: 1px solid #3b4143; }
.vscroll button { height: 13px; display: grid; place-items: center; color: #b9bdbd; font-size: 9px; line-height: 9px; background: #5e6466; border: 1px solid #42484a; }
.vscroll svg { width: 8px; height: 8px; }
.vscroll .dot { background: none; color: #1f2223; }
.vscroll i { height: 22px; background: #798083; }
.vscroll .down { margin-top: auto; }
.heads { grid-column: 1; grid-row: 3; }
.lanes { grid-column: 2; grid-row: 3; }
.overview, .ruler { grid-column: 2; }

/* Taskbar */
.taskbar { height: 33px; flex: none; display: flex; align-items: center; padding: 0 13px 0 179px; background: #1c1c1d; color: #eee; font-family: "Open Sans", sans-serif; border-top: 1px solid #2a2b2c; }
.start { width: 16px; display: grid; grid-template-columns: 1fr 1fr; gap: 1px; margin-right: 9px; }
.start i { height: 7px; background: linear-gradient(135deg, #7fe0fb, #2aa4ea); }
.search { width: 146px; height: 22px; border-radius: 11px; background: #363637; display: flex; align-items: center; padding: 0 7px; }
.search svg { width: 11px; height: 11px; }
.search input { flex: 1; padding-left: 6px; font-size: 9px; }
.search input::placeholder { color: #dcdcdc; opacity: 1; }
.search .scene { width: 27px; height: 16px; }
.apps { flex: 1; max-width: 734px; display: grid; grid-template-columns: repeat(25, 1fr); margin-left: 1px; }
.apps button { height: 28px; display: grid; justify-items: center; align-items: center; position: relative; }
.apps svg { width: 17px; height: 17px; }
.apps .run::after { content: ""; position: absolute; bottom: 1px; left: 50%; margin-left: -2px; width: 4px; height: 2px; border-radius: 1px; background: #9b9b9b; }
.apps .current { background: #2d2d2e; border-radius: 3px; }
.apps .current::after { width: 10px; margin-left: -5px; background: #dd8be0; }
.glyph { font: 900 13px Roboto, sans-serif; fill: #fff; }
.tiny { font: 700 6px Roboto, sans-serif; fill: #fff; }
.tray { margin-left: auto; display: flex; align-items: center; gap: 8px; }
.tray svg { width: 12px; height: 12px; }
.time { font-size: 8px; line-height: 11px; text-align: right; margin-left: 3px; }
```
FILE: script.js
```
const TRACKS = 19;
const BARS = 100;

// Deterministic noise so the waveforms never change between loads
let seed = 7;
function rnd() {
    seed = (seed * 16807) % 2147483647;
    return seed / 2147483647;
}

// Bursts are [from, to, amplitude] along a clip of the given width
function wavePath(width, bursts) {
    const top = [];
    const bottom = [];
    for (let x = 0; x <= width; x++) {
        let amp = 0.5;
        bursts.forEach(([from, to, a]) => {
            if (x >= from && x <= to) amp = Math.max(amp, a * (0.7 + rnd() * 0.3));
        });
        top.push(`${x} ${10.5 - amp}`);
        bottom.unshift(`${x} ${10.5 + amp}`);
    }
    return "M" + top.concat(bottom).join("L") + "Z";
}

const clips = [
    { track: 1, start: 0, length: 83.3, width: 779, name: "heat (1)", cls: "long",
      bursts: [[0, 63, 11.5], [65, 127, 11.5], [129, 257, 12], [64, 64, 4], [128, 128, 6],
               [258, 387, 10.3], [389, 452, 10.3], [454, 714, 10], [715, 716, 5], [717, 779, 2.5]] },
    { track: 2, start: 23.5, length: 4.7, width: 44, name: "untit.._REC",
      bursts: [[4, 7, 7], [17, 19, 8], [20, 23, 5], [29, 31, 4], [33, 34, 6], [35, 36, 10], [37, 38, 6]] },
    { track: 3, start: 25, length: 4, width: 37, name: "unti..REC",
      bursts: [[3, 5, 4], [6, 9, 5], [15, 17, 4], [19, 20, 5], [21, 22, 10], [23, 24, 5]] },
    { track: 4, start: 24.5, length: 10.7, width: 100, name: "untitled_2026..22-30-55_REC",
      bursts: [[7, 9, 3], [10, 13, 3], [20, 21, 3], [24, 26, 3], [30, 99, 1.4]] },
    { track: 5, start: 26.3, length: 12.8, width: 119, name: "untitled_2026-04-18 22-42-54_REC",
      bursts: [[7, 9, 4], [10, 12, 6], [13, 14, 10], [15, 38, 5], [39, 40, 10], [41, 62, 4], [63, 90, 5], [91, 108, 6]] }
];

const heads = document.getElementById("heads");
const lanes = document.getElementById("lanes");

for (let i = 1; i <= TRACKS; i++) {
    heads.insertAdjacentHTML("beforeend",
        `<div class="track ${i <= 5 ? "used" : ""}"><span>Track ${i}</span><button aria-label="Mute track ${i}"></button><i></i></div>`);

    const html = clips.filter(c => c.track === i).map(c => `
        <div class="clip ${c.cls || ""}" style="left: ${c.start}%; width: ${c.length}%">
            <h2>${c.name}</h2>
            <svg viewBox="0 0 ${c.width} 21" preserveAspectRatio="none"><path d="${wavePath(c.width, c.bursts)}" fill="currentColor"/></svg>
        </div>`).join("");
    lanes.insertAdjacentHTML("beforeend", `<div class="lane">${html}</div>`);
}

// Take being recorded on track 6
lanes.children[6].innerHTML = `<div class="clip pending" style="left: 26.7%; width: 1%">
    <svg viewBox="0 0 9 21"><path d="M0 16h4l1-2 2 2h2v1H7l-2 2-1-2H0z" fill="currentColor"/></svg></div>`;

// Bar numbers
const ruler = document.getElementById("ruler");
for (let bar = 1; bar < BARS; bar += 2) {
    ruler.insertAdjacentHTML("beforeend", `<span>${bar}</span>`);
}

// Recorded takes in the picker
const list = document.getElementById("pickerList");
for (let i = 0; i < 15; i++) {
    list.insertAdjacentHTML("beforeend", `<button class="${i === 14 ? "selected" : ""}">untitled_2026-04-18 22-..</button>`);
}

// Output scope
let scope = "M0 11";
for (let x = 1; x < 57; x++) {
    scope += `L${x} ${11 + Math.round((rnd() - 0.5) * 5)}`;
}
document.getElementById("scopePath").setAttribute("d", scope);
```
